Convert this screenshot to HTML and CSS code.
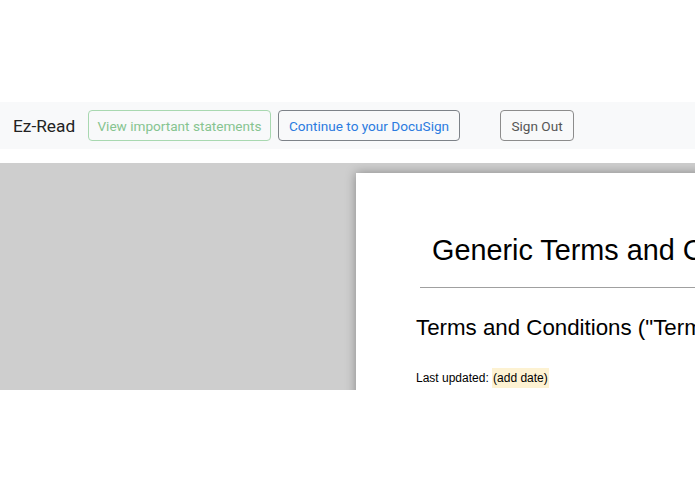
FILE: index.html
```html
<!DOCTYPE html>
<html lang="en">
<head>
<meta charset="utf-8">
<title>Ez-Read</title>
<link rel="stylesheet" href="styles.css">
</head>
<body>
<div class="top-space"></div>
<nav class="navbar">
  <span class="brand">Ez-Read</span>
  <button class="btn btn-success">View important statements</button>
  <button class="btn btn-primary">Continue to your DocuSign</button>
  <button class="btn btn-signout">Sign Out</button>
</nav>
<main class="viewer">
  <div class="paper">
    <h1 class="doc-title">Generic Terms and Conditions Template</h1>
    <hr class="doc-rule">
    <h2 class="doc-subtitle">Terms and Conditions ("Terms")</h2>
    <p class="doc-text">Last updated: <span class="mark">(add date)</span></p>
  </div>
</main>
</body>
</html>
```
FILE: styles.css
```css
html, body {
  margin: 0;
  padding: 0;
  background: #ffffff;
  overflow: hidden;
}
body {
  width: 695px;
  height: 494px;
  font-family: "Roboto", "Liberation Sans", sans-serif;
}
.top-space {
  height: 102px;
}
.navbar {
  height: 47px;
  background: #f8f9fa;
  display: flex;
  align-items: center;
  padding: 0 0 0 13px;
  box-sizing: border-box;
}
.brand {
  font-family: "Roboto", "Liberation Sans", sans-serif;
  font-size: 17.3px;
  color: #222;
  width: 75px;
}
.btn {
  height: 31px;
  box-sizing: border-box;
  background: transparent;
  border: 1px solid;
  border-radius: 4px;
  font-family: "Roboto", "Liberation Sans", sans-serif;
  font-size: 13.6px;
  padding: 0;
  margin: 0;
  white-space: nowrap;
  text-align: center;
}
.btn-success {
  width: 183px;
  border-color: #a8d8b0;
  color: #86c490;
  margin-right: 7px;
}
.btn-primary {
  width: 182px;
  border-color: #7d8288;
  color: #2b7be0;
  margin-right: 40px;
}
.btn-signout {
  width: 74px;
  border-color: #8c8c8c;
  color: #555;
}
.viewer {
  margin-top: 14px;
  height: 227px;
  background: #cecece;
  overflow: hidden;
  padding: 10px 0 0 356px;
  box-sizing: border-box;
}
.paper {
  width: 700px;
  height: 400px;
  background: #fff;
  box-shadow: 0 0 10px rgba(0, 0, 0, 0.35);
  padding: 60px 0 0 60px;
  box-sizing: border-box;
  font-family: "Liberation Sans", Arial, sans-serif;
  color: #000;
}
.doc-title {
  margin: 0;
  padding-left: 16px;
  font-size: 28.8px;
  line-height: 34px;
  font-weight: normal;
  white-space: nowrap;
}
.doc-rule {
  margin: 20px 0 0 4px;
  border: 0;
  border-top: 1px solid #a0a0a0;
  height: 0;
}
.doc-subtitle {
  margin: 27px 0 0 0;
  font-size: 22.3px;
  line-height: 26px;
  font-weight: normal;
  white-space: nowrap;
}
.doc-text {
  margin: 30px 0 0 0;
  font-size: 12px;
  line-height: 14px;
}
.mark {
  background: #fdf2d2;
  padding: 3px 1px;
}
```
